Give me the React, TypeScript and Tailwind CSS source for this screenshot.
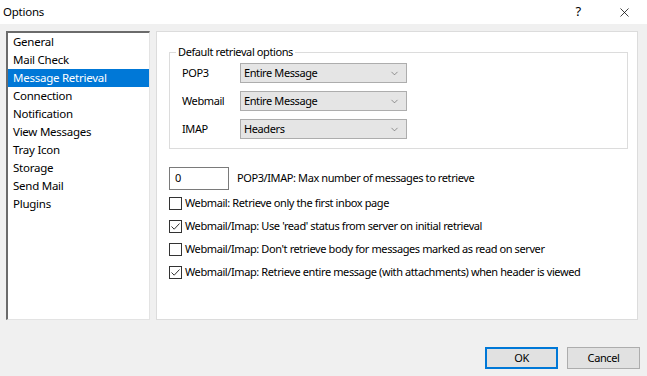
import { ChevronDown, X } from 'lucide-react';

const pages = [
  'General',
  'Mail Check',
  'Message Retrieval',
  'Connection',
  'Notification',
  'View Messages',
  'Tray Icon',
  'Storage',
  'Send Mail',
  'Plugins',
];

const retrieval = [
  { label: 'POP3', value: 'Entire Message' },
  { label: 'Webmail', value: 'Entire Message' },
  { label: 'IMAP', value: 'Headers' },
];

const options = [
  { label: 'Webmail: Retrieve only the first inbox page', checked: false },
  { label: "Webmail/Imap: Use 'read' status from server on initial retrieval", checked: true },
  { label: "Webmail/Imap: Don't retrieve body for messages marked as read on server", checked: false },
  { label: 'Webmail/Imap: Retrieve entire message (with attachments) when header is viewed', checked: true },
];

export default function App() {
  return (
    <div className="flex h-[376px] w-[647px] flex-col bg-[#f0f0f0] font-['Noto_Sans',sans-serif] text-[11px] tracking-[-0.4px] text-black">
      {/* title bar */}
      <div className="flex h-[24px] items-center bg-white pl-[3px]">
        <span className="flex-1 text-[11.5px] tracking-[-0.25px]">Options</span>
        <span className="w-[46px] text-center text-[13px]">?</span>
        <span className="flex w-[46px] items-center justify-center">
          <X className="h-[15px] w-[15px]" strokeWidth={1.2} />
        </span>
      </div>

      <div className="flex h-[296px] gap-[6px] pl-[6px] pt-[7px]">
        {/* page list */}
        <div className="w-[144px] border-l-2 border-t-2 border-b border-r border-l-[#6b6b6b] border-t-[#6b6b6b] border-b-[#e3e3e3] border-r-[#e3e3e3] bg-white">
          {pages.map((p) => (
            <div
              key={p}
              className={
                'h-[18px] pl-[5px] text-[11.5px] leading-[18px] tracking-[-0.25px] ' +
                (p === 'Message Retrieval' ? 'bg-[#0078d7] text-white' : '')
              }
            >
              {p}
            </div>
          ))}
        </div>

        {/* page content */}
        <div className="w-[482px] border border-[#dcdcdc] bg-white pl-[12px] pr-[9px] pt-[13px]">
          <fieldset className="h-[104px] border border-[#dcdcdc] pl-[12px] pt-[4px]">
            <legend className="ml-[-6px] px-[2px] leading-[14px]">Default retrieval options</legend>
            <div className="flex flex-col gap-[8px]">
              {retrieval.map((r) => (
                <div key={r.label} className="flex items-center">
                  <span className="w-[58px]">{r.label}</span>
                  <div className="flex h-[20px] w-[167px] items-center justify-between border border-[#adadad] bg-[#e5e5e5] pl-[3px] pr-[6px]">
                    <span>{r.value}</span>
                    <ChevronDown className="h-[11px] w-[11px] text-[#555]" strokeWidth={1.3} />
                  </div>
                </div>
              ))}
            </div>
          </fieldset>

          <div className="mt-[18px] flex items-center gap-[8px]">
            <div className="flex h-[23px] w-[60px] items-center border border-[#7a7a7a] pl-[5px]">0</div>
            <span>POP3/IMAP: Max number of messages to retrieve</span>
          </div>

          <div className="mt-[7px] flex flex-col gap-[10px]">
            {options.map((o) => (
              <label key={o.label} className="flex h-[13px] items-center gap-[3px] whitespace-nowrap">
                <span className="flex h-[13px] w-[13px] items-center justify-center border border-[#333] bg-white">
                  {o.checked && (
                    <svg viewBox="0 0 11 11" className="h-[11px] w-[11px]">
                      <path d="M1.5 5.5 L4.2 8.2 L9.5 2.5" fill="none" stroke="#333" strokeWidth="1" />
                    </svg>
                  )}
                </span>
                <span>{o.label}</span>
              </label>
            ))}
          </div>
        </div>
      </div>

      {/* buttons */}
      <div className="flex justify-end gap-[9px] pr-[7px] pt-[27px]">
        <button className="h-[22px] w-[73px] border-2 border-[#0078d7] bg-[#e1e1e1]">OK</button>
        <button className="h-[22px] w-[73px] border border-[#adadad] bg-[#e1e1e1]">Cancel</button>
      </div>
    </div>
  );
}
